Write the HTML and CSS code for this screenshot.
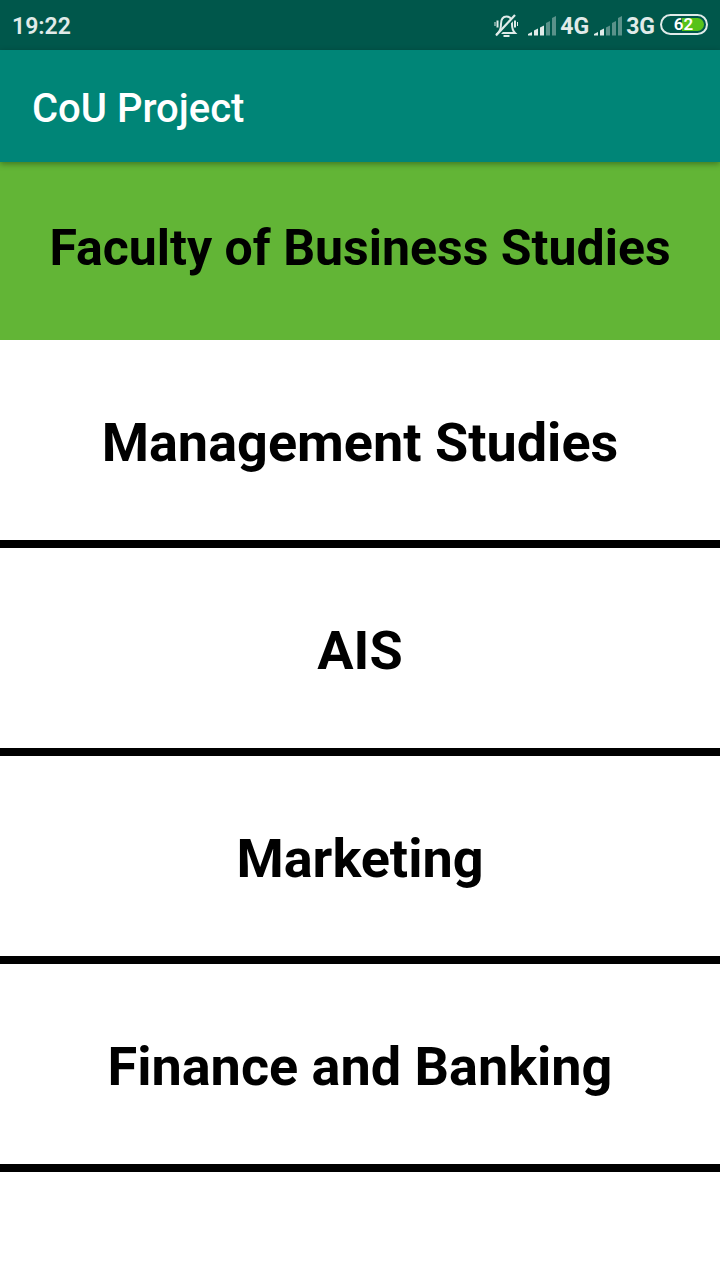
FILE: index.html
```html
<!DOCTYPE html>
<html lang="en">
<head>
<meta charset="utf-8">
<meta name="viewport" content="width=device-width, initial-scale=1">
<title>CoU Project</title>
<link rel="stylesheet" href="styles.css">
</head>
<body>
<div class="status">
  <time class="clock">19:22</time>
  <div class="indicators">
    <svg class="bell" width="24" height="24" viewBox="0 0 24 24" aria-hidden="true">
      <g fill="none" stroke="#e0ebe9" stroke-width="2">
        <path d="M4 19h17c-2-2-3-4-3-9 0-4.500-2-7.500-5.500-7.500S7 5.500 7 10c0 5-1 7-3 9z"/>
        <path d="M9.500 22h6"/>
        <path d="M3.500 6.500v7M21 6.500v7" stroke-width="2"/>
        <path d="M1 8v4M23.500 8v4" stroke-width="1"/>
      </g>
      <path d="M4.500 20.500 19 5" stroke="#00574b" stroke-width="3"/>
      <path d="M2 21.500 21 1" stroke="#e0ebe9" stroke-width="2.200"/>
    </svg>
    <svg class="signal" width="28" height="20" viewBox="0 0 28 20" aria-hidden="true">
      <path fill="#e0ebe9" d="M0 19.500V18l4-2v3.500zM6 19.500v-5l4-2v7zM12 19.500v-8l4-2v10z"/>
      <path fill="#e0ebe9" fill-opacity=".4" d="M18 19.500V7l4-2v14.500zM24 19.500V2l4-2v19.500z"/>
    </svg>
    <span class="network">4G</span>
    <svg class="signal" width="28" height="20" viewBox="0 0 28 20" aria-hidden="true">
      <path fill="#e0ebe9" d="M0 19.500V18l4-2v3.500zM6 19.500v-5l4-2v7z"/>
      <path fill="#e0ebe9" fill-opacity=".4" d="M12 19.500v-8l4-2v10zM18 19.500V7l4-2v14.500zM24 19.500V2l4-2v19.500z"/>
    </svg>
    <span class="network">3G</span>
    <span class="battery"><span class="charge">62</span></span>
  </div>
</div>
<header class="appbar"><h1 class="title">CoU Project</h1></header>
<main>
  <h2 class="faculty">Faculty of Business Studies</h2>
  <nav class="departments">
    <button class="department" type="button">Management Studies</button>
    <button class="department" type="button">AIS</button>
    <button class="department" type="button">Marketing</button>
    <button class="department" type="button">Finance and Banking</button>
  </nav>
</main>
</body>
</html>
```
FILE: styles.css
```css
* { box-sizing: border-box; }
body { margin: 0; background: #fff; color: #000; font-family: Roboto, sans-serif; }
.status {
  display: flex; align-items: center; justify-content: space-between;
  height: 50px; padding: 2px 12px 0;
  background: #00574b; color: #e0ebe9;
  font-size: 23px; font-weight: 700; line-height: 28px;
}
.clock { padding-top: 2px; font-weight: 600; }
.indicators { display: flex; align-items: center; }
.bell { margin-right: 10px; overflow: visible; }
.network { margin: 0 5px 0 4px; padding-top: 2px; }
.battery {
  display: flex; width: 48px; height: 21px; margin-bottom: 3px; padding: 2px;
  border: 2px solid #e0ebe9; border-radius: 11px;
}
.charge {
  flex: 1; padding-right: 1px; border-radius: 7px;
  background: linear-gradient(90deg, #00574b 44%, #57c219 44%);
  color: #fff; font-size: 17px; font-weight: 600; line-height: 13px; text-align: center;
}
.appbar {
  position: relative; display: flex; align-items: center;
  min-height: 112px; padding: 6px 32px 0;
  background: #008577; box-shadow: 0 2px 6px rgba(0, 0, 0, .35);
}
.title { margin: 0; color: #fff; font-size: 40px; font-weight: 500; line-height: 48px; }
.faculty {
  margin: 0; padding: 56px 16px 62px;
  background: #62b536; font-size: 50px; font-weight: 700; line-height: 60px; text-align: center;
}
.departments { display: flex; flex-direction: column; }
.department {
  min-height: 208px; padding: 6px 16px 0;
  border: 0; border-bottom: 8px solid #000;
  background: #fff; color: #000;
  font: 700 54px/64px Roboto, sans-serif; text-align: center;
}
```
